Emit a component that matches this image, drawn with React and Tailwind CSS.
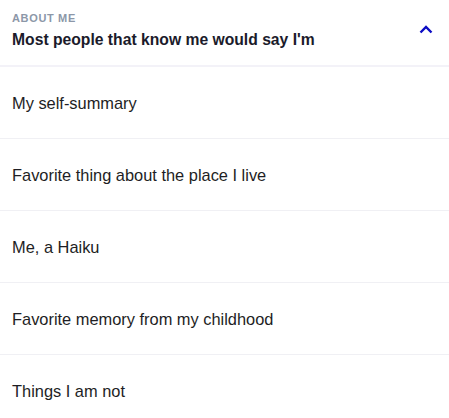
import React from 'react'

const items = [
  'My self-summary',
  'Favorite thing about the place I live',
  'Me, a Haiku',
  'Favorite memory from my childhood',
  'Things I am not',
]

const App = () => {
  return (
    <div className="w-[449px] h-[418px] overflow-hidden bg-white font-['Liberation_Sans',Arial,sans-serif]">
      {/* Header */}
      <div className="h-[67px] flex items-center justify-between pl-3 pr-4 border-b-2 border-[#f3f2f8]">
        <div className="flex flex-col pb-[5px]">
          <span className="text-[11px] leading-[14px] font-bold tracking-[0.06em] text-[#8c97a8]">ABOUT ME</span>
          <span className="mt-[5px] text-[15.7px] leading-[20px] font-bold text-[#1b1b2b]">
            Most people that know me would say I'm
          </span>
        </div>
        <svg width="14" height="9" viewBox="0 0 14 9" className="mb-[6px]">
          <path d="M1.5 7.5 L7 2 L12.5 7.5" fill="none" stroke="#0c0cc4" strokeWidth="2.4" />
        </svg>
      </div>

      {/* Rows */}
      {items.map((item) => (
        <div
          key={item}
          className="h-[72px] flex items-center pl-3 border-b border-[#f0f0f4] text-[16.4px] text-[#1e1e24]"
        >
          <span className="pt-[1px]">{item}</span>
        </div>
      ))}
    </div>
  )
}

export default App
